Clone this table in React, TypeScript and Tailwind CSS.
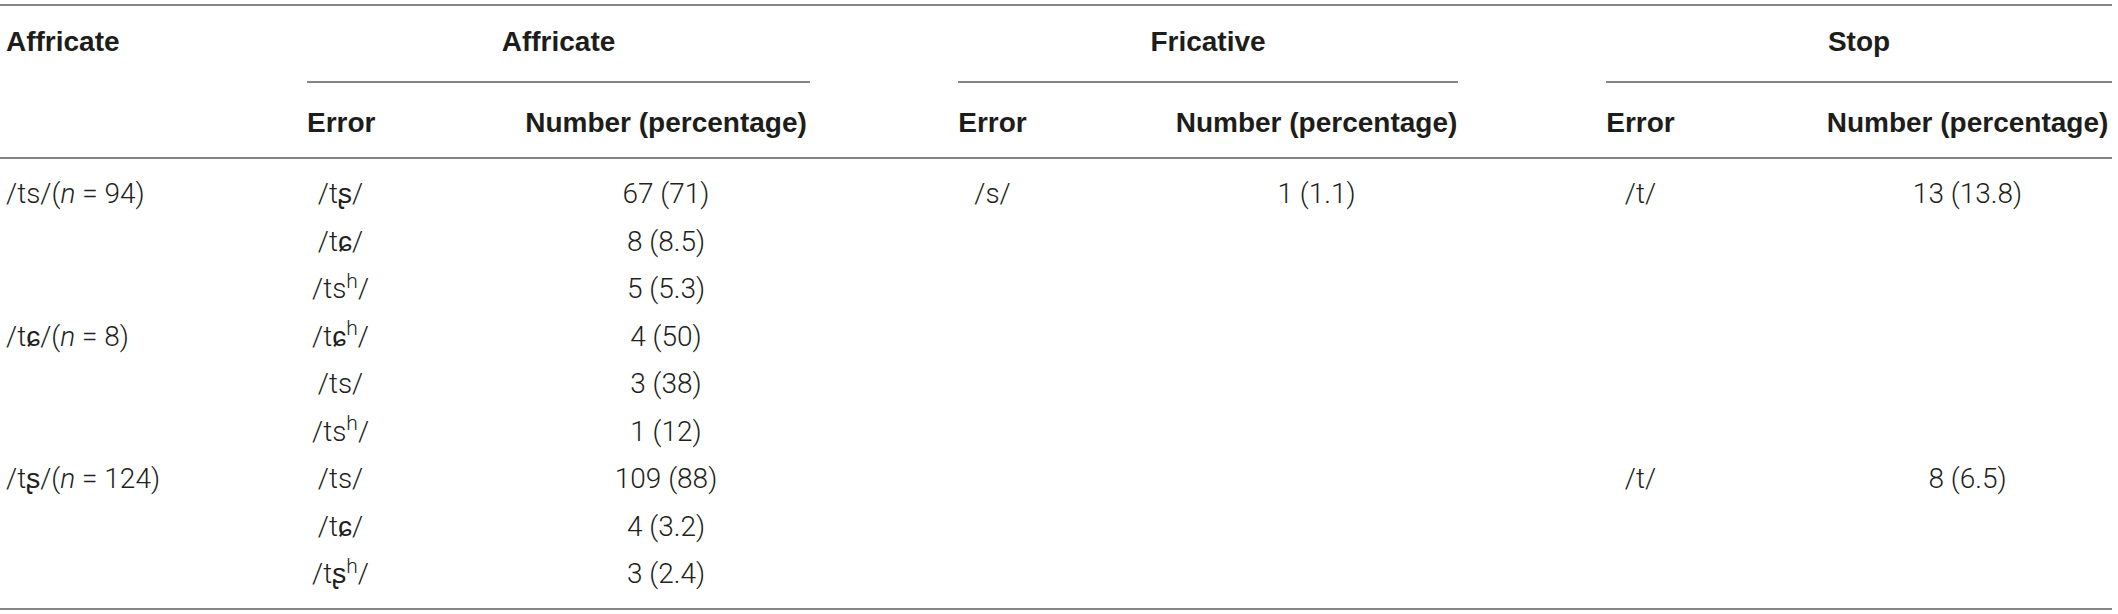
import type { ReactNode } from "react";

const cols =
  "grid grid-cols-[153px_67px_288px_69px_283px_69px_289px] gap-x-[148px] pl-[6px]";

const Asp = ({ base }: { base: string }) => (
  <>
    /{base}
    <sup>h</sup>/
  </>
);

const Target = ({ sound, n }: { sound: string; n: number }) => (
  <>
    /{sound}/(<i>n</i> = {n})
  </>
);

const groups = ["Affricate", "Fricative", "Stop"];

const rows: ReactNode[][] = [
  [<Target sound="ts" n={94} />, "/tʂ/", "67 (71)", "/s/", "1 (1.1)", "/t/", "13 (13.8)"],
  ["", "/tɕ/", "8 (8.5)"],
  ["", <Asp base="ts" />, "5 (5.3)"],
  [<Target sound="tɕ" n={8} />, <Asp base="tɕ" />, "4 (50)"],
  ["", "/ts/", "3 (38)"],
  ["", <Asp base="ts" />, "1 (12)"],
  [<Target sound="tʂ" n={124} />, "/ts/", "109 (88)", "", "", "/t/", "8 (6.5)"],
  ["", "/tɕ/", "4 (3.2)"],
  ["", <Asp base="tʂ" />, "3 (2.4)"],
];

const App = () => {
  return (
    <div className="min-h-[614px] w-full bg-white pt-[4px]">
      <div className="w-[2112px]">
        {/* шапка таблицы */}
        <div className="border-y-2 border-[#858585] font-['Liberation_Sans',Arial,sans-serif] text-[28px] leading-[32px] font-bold text-[#1d1d1b]">
          <div className={cols}>
            <div className="pt-[20px]">Affricate</div>
            {groups.map((g) => (
              <div
                key={g}
                className="col-span-2 border-b-2 border-[#858585] pt-[20px] pb-[23px] text-center"
              >
                {g}
              </div>
            ))}
            <div />
            {groups.map((g) => (
              <div key={g} className="contents">
                <div className="pt-[24px] pb-[18px] text-center whitespace-nowrap">Error</div>
                <div className="pt-[24px] pb-[18px] text-center whitespace-nowrap">
                  Number (percentage)
                </div>
              </div>
            ))}
          </div>
        </div>

        {/* данные */}
        <div className="border-b-2 border-[#858585] font-['Roboto',Arial,sans-serif] text-[28px] font-light text-[#231f20]">
          <div className={`${cols} auto-rows-[47.5px] pt-[11px] pb-[10px]`}>
            {rows.map((row, i) =>
              Array.from({ length: 7 }, (_, j) => (
                <div
                  key={`${i}-${j}`}
                  className={`leading-[47.5px] whitespace-nowrap ${j === 0 ? "text-left" : "text-center"}`}
                >
                  {row[j] ?? ""}
                </div>
              ))
            )}
          </div>
        </div>
      </div>
    </div>
  );
};

export default App;
